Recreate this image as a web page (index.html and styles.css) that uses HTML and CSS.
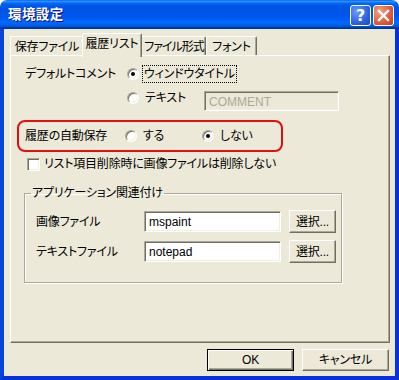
FILE: index.html
```html
<!DOCTYPE html>
<html lang="ja">
<head>
  <meta charset="UTF-8">
  <title>環境設定</title>
  <link rel="stylesheet" href="styles.css">
</head>
<body>
  <div class="window">
    <div class="titlebar">
      <span class="title">環境設定</span>
      <div class="tb-buttons">
        <span class="tb-btn help">?</span>
        <span class="tb-btn close">
          <svg width="13" height="13" viewBox="0 0 13 13">
            <path d="M2 2 L11 11 M11 2 L2 11" stroke="#fff" stroke-width="2.4" stroke-linecap="square"/>
          </svg>
        </span>
      </div>
    </div>

    <div class="frame">
      <div class="client">
        <!-- tab strip -->
        <div class="tabs">
          <div class="tab t1">保存ファイル</div>
          <div class="tab t2 active">履歴リスト</div>
          <div class="tab t3">ファイル形式</div>
          <div class="tab t4">フォント</div>
        </div>

        <div class="panel">
          <div class="row r-comment">
            <span class="label">デフォルトコメント</span>
            <span class="opt"><span class="radio on"></span><span class="focus">ウィンドウタイトル</span></span>
          </div>

          <div class="row r-text">
            <span class="label"></span>
            <span class="opt w-text"><span class="radio"></span>テキスト</span>
            <span class="textbox disabled comment">COMMENT</span>
          </div>

          <div class="row highlight">
            <span class="label">履歴の自動保存</span>
            <span class="opt w-suru"><span class="radio"></span>する</span>
            <span class="opt"><span class="radio on"></span>しない</span>
          </div>

          <div class="row r-check">
            <span class="check"></span>リスト項目削除時に画像ファイルは削除しない
          </div>

          <fieldset class="group">
            <legend>アプリケーション関連付け</legend>
            <div class="assoc">
              <span class="assoc-label">画像ファイル</span>
              <span class="textbox app">mspaint</span>
              <span class="btn pick">選択...</span>
            </div>
            <div class="assoc">
              <span class="assoc-label">テキストファイル</span>
              <span class="textbox app">notepad</span>
              <span class="btn pick">選択...</span>
            </div>
          </fieldset>
        </div>

        <div class="footer">
          <span class="btn default">OK</span>
          <span class="btn">キャンセル</span>
        </div>
      </div>
    </div>
  </div>
</body>
</html>
```

FILE: styles.css
```css
/* General */
body {
  margin: 0;
  background: #fff;
  font-family: "Liberation Sans", "Noto Sans CJK JP", sans-serif;
  font-size: 12px;
  line-height: 14px;
  font-feature-settings: "palt";
  letter-spacing: -0.2px;
  color: #000;
}

.window {
  width: 399px;
  height: 380px;
  display: flex;
  flex-direction: column;
}

/* Title bar */
.titlebar {
  height: 29px;
  flex: none;
  display: flex;
  align-items: center;
  justify-content: space-between;
  padding: 0 5px 0 8px;
  border-radius: 7px 7px 0 0;
  background: linear-gradient(to bottom,
    #0058ee 0%, #3593ff 4%, #288eff 6%, #127dff 8%, #036ffc 10%,
    #0262ee 14%, #0057e5 20%, #0054e3 24%, #0055eb 56%, #005bf5 66%,
    #026afe 76%, #0062ef 86%, #0052d6 92%, #0040ab 94%, #003092 100%);
}

.title {
  color: #fff;
  font-weight: bold;
  font-size: 13.5px;
  letter-spacing: 0.4px;
  text-shadow: 1px 1px #0f1089;
  margin-top: 1px;
}

.tb-buttons {
  display: flex;
  gap: 2px;
  margin-top: 2px;
}

.tb-btn {
  width: 21px;
  height: 21px;
  box-sizing: border-box;
  border: 1px solid #fff;
  border-radius: 3px;
  display: flex;
  align-items: center;
  justify-content: center;
  color: #fff;
}

.help {
  background: radial-gradient(circle at 30% 30%, #6b9bfa 0%, #2d63e0 60%, #1a49c4 100%);
  font: bold 16px "DejaVu Sans", sans-serif;
}

.close {
  background: radial-gradient(circle at 30% 30%, #f1a48a 0%, #e35d3d 55%, #c5391b 100%);
}

/* Window frame */
.frame {
  flex: 1;
  display: flex;
  border-left: 4px solid #0845dc;
  border-right: 4px solid #0831d9;
  border-bottom: 4px solid #0831d9;
  box-shadow: inset 1px 0 #166aee;
}

.client {
  flex: 1;
  background: #ece9d8;
  padding: 4px 5px 0 6px;
  display: flex;
  flex-direction: column;
}

/* Tabs */
.tabs {
  height: 22px;
  display: flex;
  align-items: flex-end;
}

.tab {
  height: 19px;
  box-sizing: border-box;
  border-top: 1px solid #fff;
  border-left: 1px solid #fff;
  border-right: 1px solid #716f64;
  border-radius: 2px 2px 0 0;
  box-shadow: inset -1px 0 #aca899;
  display: flex;
  justify-content: center;
  white-space: nowrap;
  padding-top: 3px;
}

.t1 { width: 74px; }
.t2 { width: 60px; }
.t3 { width: 66px; letter-spacing: -1px; padding-left: 2px; }
.t4 { width: 51px; }

.tab.active {
  height: 24px;
  margin: 0 -2px -2px;
  padding-top: 3px;
  position: relative;
  z-index: 1;
  background: #ece9d8;
}

/* Panel */
.panel {
  height: 288px;
  box-sizing: border-box;
  border: 1px solid;
  border-color: #fff #716f64 #716f64 #fff;
  box-shadow: inset -1px -1px #aca899;
  padding-top: 9px;
  display: flex;
  flex-direction: column;
}

.row {
  display: flex;
  align-items: center;
}

.label {
  width: 102px;
  flex: none;
  padding-left: 14px;
  white-space: nowrap;
}

.opt {
  display: flex;
  align-items: center;
  height: 18px;
}

.radio {
  width: 12px;
  height: 12px;
  box-sizing: border-box;
  border-radius: 50%;
  border: 1px solid;
  border-color: #aca899 #fff #fff #aca899;
  box-shadow: inset 1px 1px #716f64, inset -1px -1px #f1efe2;
  background: #fff;
  margin-right: 6px;
  display: flex;
  align-items: center;
  justify-content: center;
}

.radio.on::after {
  content: "";
  width: 4px;
  height: 4px;
  border-radius: 50%;
  background: #000;
}

.focus {
  outline: 1px dotted #000;
  padding: 1px 1px;
  margin-left: -2px;
}

.r-comment {
  height: 18px;
}

.r-text {
  height: 22px;
  margin-top: 6px;
  align-items: flex-start;
}

.w-text {
  width: 77px;
}

/* Text boxes */
.textbox {
  height: 21px;
  box-sizing: border-box;
  border: 1px solid;
  border-color: #aca899 #fff #fff #aca899;
  box-shadow: inset 1px 1px #716f64, inset -1px -1px #f1efe2;
  background: #fff;
  padding: 3px 0 0 4px;
  white-space: nowrap;
  letter-spacing: 0;
}

.textbox.disabled {
  background: #ece9d8;
  color: #aca899;
}

.comment {
  width: 135px;
  height: 20px;
  margin-top: 2px;
}

/* Highlighted row */
.highlight {
  margin: 9px 0 0 6px;
  width: 266px;
  height: 32px;
  box-sizing: border-box;
  border: 2px solid #e30e0e;
  border-radius: 8px;
}

.highlight .label {
  width: 100px;
  padding-left: 6px;
}

.w-suru {
  width: 77px;
}

/* Checkbox row */
.r-check {
  height: 14px;
  margin-top: 5px;
  padding-left: 16px;
  white-space: nowrap;
}

.check {
  width: 13px;
  height: 13px;
  box-sizing: border-box;
  border: 1px solid;
  border-color: #aca899 #fff #fff #aca899;
  box-shadow: inset 1px 1px #716f64, inset -1px -1px #f1efe2;
  background: #fff;
  margin-right: 4px;
}

/* Group box */
.group {
  margin: 15px 0 0 13px;
  width: 318px;
  height: 97px;
  box-sizing: border-box;
  border: 1px solid #aca899;
  box-shadow: inset 1px 1px #fff, 1px 1px #fff;
  padding: 10px 0 0 11px;
  min-inline-size: 0;
}

.group legend {
  padding: 0 1px;
  margin-left: -5px;
  line-height: 14px;
}

.assoc {
  display: flex;
  align-items: center;
  height: 23px;
}

.assoc + .assoc {
  margin-top: 7px;
}

.assoc-label {
  width: 108px;
  flex: none;
}

.app {
  width: 137px;
}

/* Buttons */
.btn {
  height: 22px;
  box-sizing: border-box;
  border: 1px solid;
  border-color: #fff #716f64 #716f64 #fff;
  box-shadow: inset -1px -1px #aca899;
  background: #ece9d8;
  display: flex;
  align-items: center;
  justify-content: center;
}

.pick {
  width: 47px;
  height: 23px;
  margin-left: 8px;
}

.footer {
  display: flex;
  justify-content: flex-end;
  gap: 8px;
  margin-top: 6px;
  padding-right: 1px;
}

.footer .btn {
  width: 87px;
}

.btn.default {
  border-color: #000;
  box-shadow: inset 1px 1px #fff, inset -1px -1px #716f64, inset -2px -2px #aca899;
}
```
